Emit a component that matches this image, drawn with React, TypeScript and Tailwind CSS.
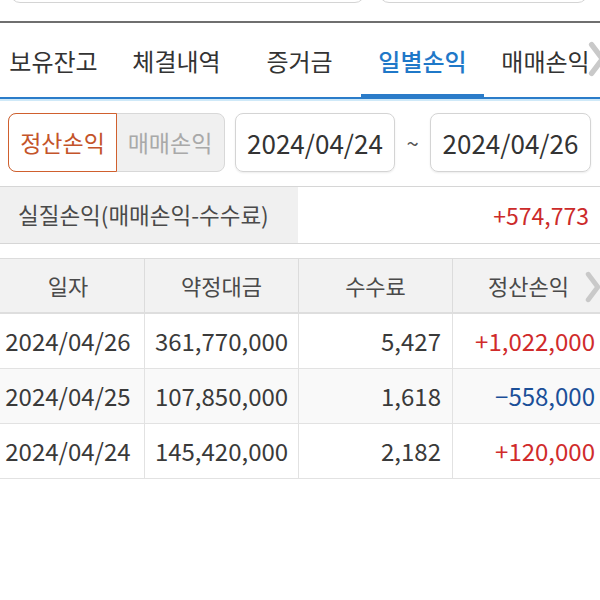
import React from "react";

const font = { fontFamily: '"Noto Sans CJK KR", "Noto Sans", sans-serif' };

const rows = [
  { date: "2024/04/26", amt: "361,770,000", fee: "5,427", pl: "+1,022,000", up: true, bg: "bg-white" },
  { date: "2024/04/25", amt: "107,850,000", fee: "1,618", pl: "\u2212558,000", up: false, bg: "bg-[#f9f9f9]" },
  { date: "2024/04/24", amt: "145,420,000", fee: "2,182", pl: "+120,000", up: true, bg: "bg-white" },
];

function Chevron({ className }: { className: string }) {
  return (
    <svg className={className} viewBox="0 0 20 40" fill="none">
      <polyline points="4,4 16,20 4,36" stroke="#c9c9c9" strokeWidth="6" strokeLinecap="round" strokeLinejoin="round" />
    </svg>
  );
}

export default function App() {
  const tabs = ["보유잔고", "체결내역", "증거금", "일별손익", "매매손익"];
  return (
    <div className="w-[600px] h-[600px] bg-white overflow-hidden relative" style={font}>
      {/* top cut-off boxes */}
      <div className="h-[21px] flex pl-[10px] pr-[12px] gap-[14px] overflow-hidden">
        <div className="w-[355px] h-[40px] -mt-[37px] border border-[#d4d4d4] rounded-[10px] shrink-0" />
        <div className="w-[209px] h-[40px] -mt-[37px] border border-[#d4d4d4] rounded-[10px] shrink-0" />
      </div>
      <div className="h-[2px] bg-[#6f6f6f]" />

      {/* tabs */}
      <div className="relative">
        <div className="flex h-[74px] -ml-[8px] items-center">
          {tabs.map((t, i) => (
            <div
              key={t}
              className={`w-[123px] shrink-0 h-full flex items-center justify-center text-[24px] ${
                i === 3 ? "text-[#1f78c8] font-medium" : "text-[#333]"
              }`}
            >
              <span className="mt-[2px]">{t}</span>
            </div>
          ))}
        </div>
        <div className="h-[2px] bg-[#2b7cc9]" />
        <div className="absolute left-[361px] w-[123px] bottom-0 h-[5px] bg-[#2b7cc9]" />
        <Chevron className="absolute right-[-6px] top-[16px] w-[18px] h-[40px]" />
      </div>
      <div className="h-[2px] bg-[#cfe9f8]" />

      {/* filter row */}
      <div className="flex items-center pt-[12px] pl-[8px]">
        <div className="flex h-[59px] w-[217px] rounded-[8px] border border-[#d8d8d8] bg-[#f0f0f0]">
          <div className="w-[109px] -m-[1px] border border-[#d0602e] rounded-l-[8px] bg-white flex items-center justify-center text-[23px] text-[#c4542a]">
            정산손익
          </div>
          <div className="flex-1 flex items-center justify-center text-[23px] text-[#a9a9a9]">매매손익</div>
        </div>
        <div className="ml-[10px] w-[160px] h-[59px] rounded-[8px] border border-[#d4d4d4] flex items-center justify-center text-[26px] text-[#333] shadow-[0_1px_2px_rgba(0,0,0,0.08)]">
          2024/04/24
        </div>
        <div className="w-[35px] text-center text-[22px] text-[#555]">~</div>
        <div className="w-[161px] h-[59px] rounded-[8px] border border-[#d4d4d4] flex items-center justify-center text-[26px] text-[#333] shadow-[0_1px_2px_rgba(0,0,0,0.08)]">
          2024/04/26
        </div>
      </div>

      {/* summary */}
      <div className="mt-[14px] flex h-[58px] border-y border-[#d6d6d6]">
        <div className="w-[298px] bg-[#f0f0f0] flex items-center pl-[18px] text-[22.5px] text-[#4a4a4a]">
          실질손익(매매손익-수수료)
        </div>
        <div className="flex-1 flex items-center justify-end pr-[11px] text-[23px] text-[#cc2a2a]">+574,773</div>
      </div>

      {/* table */}
      <div className="mt-[14px] border-t border-[#dcdcdc]">
        <div className="relative grid grid-cols-[145px_154px_154px_147px] h-[55px] bg-[#f2f2f2] border-b-2 border-[#dedede] text-[22px] text-[#4a4a4a]">
          <div className="flex items-center justify-center border-r border-[#dcdcdc]">
            <span className="-ml-[8px]">일자</span>
          </div>
          <div className="flex items-center justify-center border-r border-[#dcdcdc]">약정대금</div>
          <div className="flex items-center justify-center border-r border-[#dcdcdc]">수수료</div>
          <div className="flex items-center pl-[35px]">정산손익</div>
          <Chevron className="absolute right-[-2px] top-[12px] w-[18px] h-[32px]" />
        </div>
        {rows.map((r) => (
          <div
            key={r.date}
            className={`grid grid-cols-[145px_154px_154px_147px] h-[55px] border-b border-[#e2e2e2] text-[24px] text-[#3a3a3a] ${r.bg}`}
          >
            <div className="flex items-center justify-center border-r border-[#e2e2e2]">
              <span className="-ml-[8px]">{r.date}</span>
            </div>
            <div className="flex items-center justify-center border-r border-[#e2e2e2]">{r.amt}</div>
            <div className="flex items-center justify-end pr-[11px] border-r border-[#e2e2e2]">{r.fee}</div>
            <div className={`flex items-center justify-end pr-[5px] ${r.up ? "text-[#d02b2b]" : "text-[#1b4f98]"}`}>
              {r.pl}
            </div>
          </div>
        ))}
      </div>
    </div>
  );
}
